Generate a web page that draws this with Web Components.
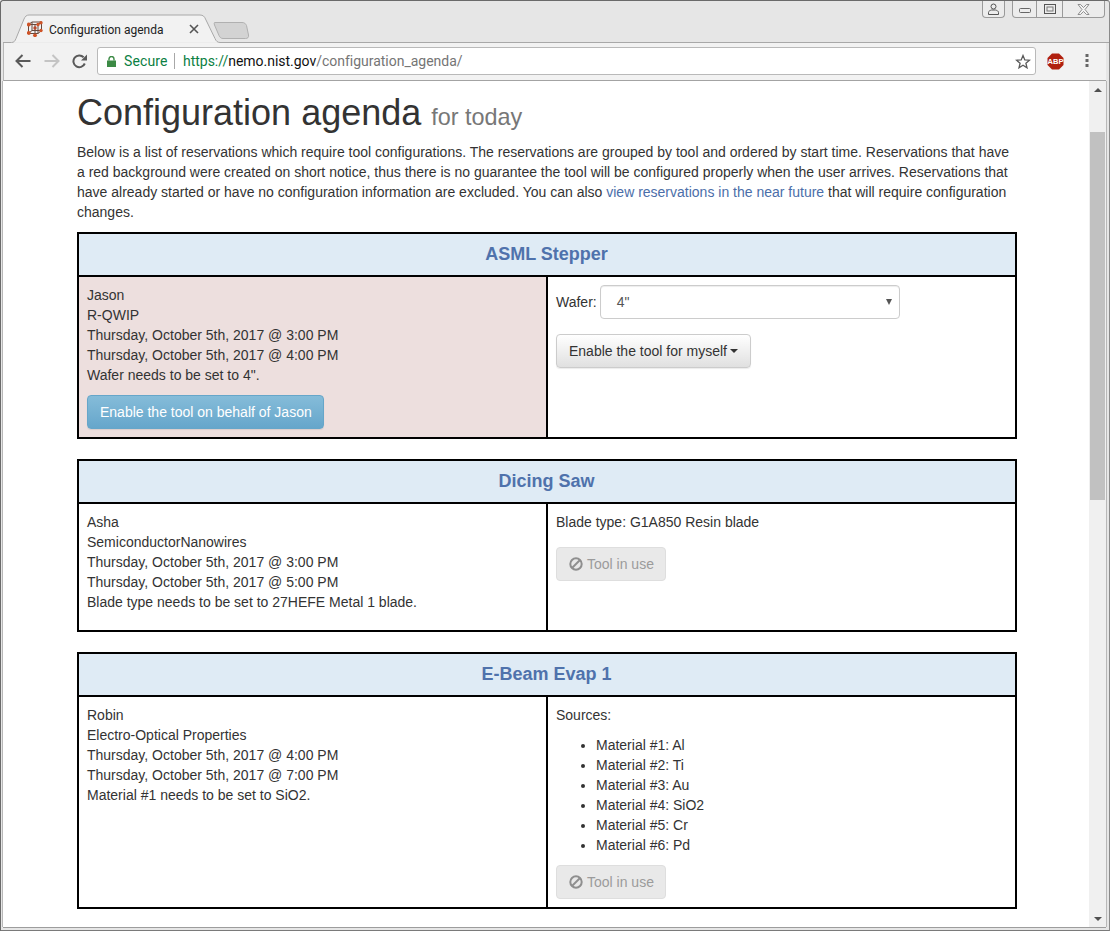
<!DOCTYPE html>
<html lang="en">
<head>
<meta charset="utf-8">
<title>Configuration agenda</title>
<style>
  html, body { margin: 0; padding: 0; height: 931px; overflow: hidden; background: #fff; }
</style>
</head>
<body>
<browser-window>
  <agenda-page>
    <agenda-item tool="ASML Stepper" urgent>
      <p-lines>
        <div>Jason</div>
        <div>R-QWIP</div>
        <div>Thursday, October 5th, 2017 @ 3:00 PM</div>
        <div>Thursday, October 5th, 2017 @ 4:00 PM</div>
        <div>Wafer needs to be set to 4".</div>
      </p-lines>
      <app-button kind="info" style="margin-top:10px">Enable the tool on behalf of Jason</app-button>
      <wafer-select slot="config" label="Wafer:" value='4"'></wafer-select>
      <app-button slot="config" caret style="margin-top:15px">Enable the tool for myself</app-button>
    </agenda-item>

    <agenda-item tool="Dicing Saw">
      <p-lines>
        <div>Asha</div>
        <div>SemiconductorNanowires</div>
        <div>Thursday, October 5th, 2017 @ 3:00 PM</div>
        <div>Thursday, October 5th, 2017 @ 5:00 PM</div>
        <div>Blade type needs to be set to 27HEFE Metal 1 blade.</div>
      </p-lines>
      <p-lines slot="config">
        <div>Blade type: G1A850 Resin blade</div>
      </p-lines>
      <app-button slot="config" kind="disabled" style="margin-top:15px">Tool in use</app-button>
    </agenda-item>

    <agenda-item tool="E-Beam Evap 1">
      <p-lines>
        <div>Robin</div>
        <div>Electro-Optical Properties</div>
        <div>Thursday, October 5th, 2017 @ 4:00 PM</div>
        <div>Thursday, October 5th, 2017 @ 7:00 PM</div>
        <div>Material #1 needs to be set to SiO2.</div>
      </p-lines>
      <p-lines slot="config">
        <div>Sources:</div>
      </p-lines>
      <source-list slot="config">
        <li>Material #1: Al</li>
        <li>Material #2: Ti</li>
        <li>Material #3: Au</li>
        <li>Material #4: SiO2</li>
        <li>Material #5: Cr</li>
        <li>Material #6: Pd</li>
      </source-list>
      <app-button slot="config" kind="disabled">Tool in use</app-button>
    </agenda-item>
  </agenda-page>
</browser-window>

<script>
class BrowserWindow extends HTMLElement {
  constructor() {
    super();
    this.attachShadow({ mode: 'open' });
  }

  connectedCallback() {
    this.shadowRoot.innerHTML = /*html*/ `
      <style>
        :host {
          display: flex;
          flex-direction: column;
          box-sizing: border-box;
          width: 1110px;
          height: 931px;
          background: #e6e6e6;
          border: 1px solid #6a6a6a;
          border-bottom-color: #7a7a7a;
          border-right-color: #8a8a8a;
          border-radius: 3px 3px 0 0;
          overflow: hidden;
        }
        .viewport {
          flex: 1;
          min-height: 0;
          display: flex;
          margin: 0 3px 3px 2px;
          background: #fff;
          box-shadow: 0 1px 0 #9d9d9d, 1px 0 0 #b8b8b8, -1px 0 0 #b8b8b8;
        }
        .content { flex: 1; min-width: 0; overflow: hidden; }
      </style>
      <browser-tabstrip></browser-tabstrip>
      <browser-toolbar></browser-toolbar>
      <div class="viewport">
        <div class="content"><slot></slot></div>
        <page-scrollbar></page-scrollbar>
      </div>
    `;
  }
}

class BrowserTabstrip extends HTMLElement {
  constructor() {
    super();
    this.attachShadow({ mode: 'open' });
  }

  connectedCallback() {
    this.shadowRoot.innerHTML = /*html*/ `
      <style>
        :host {
          display: flex;
          height: 42px;
          position: relative;
          font-family: Roboto, "Noto Sans", sans-serif;
        }
        .shape { position: absolute; left: 0; top: 0; }
        .tab {
          position: relative;
          margin: 14px 0 0 26px;
          width: 172px;
          height: 28px;
          display: flex;
          align-items: center;
          color: #222;
          font-size: 12px;
        }
        .title { margin-left: 6px; flex: 1; white-space: nowrap; padding-top: 1px; }
        .close { display: block; }
        .controls {
          position: relative;
          margin-left: auto;
          margin-right: 4px;
          display: flex;
          align-items: flex-start;
          gap: 7px;
        }
        .btn {
          box-sizing: border-box;
          height: 17px;
          border: 1px solid #9a9a9a;
          border-top: 0;
          display: flex;
          align-items: center;
          justify-content: center;
          background: #ececec;
        }
        .user { width: 23px; border-radius: 0 0 4px 4px; }
        .group { display: flex; }
        .min { width: 25px; border-radius: 0 0 0 4px; }
        .max { width: 26px; border-left: 0; }
        .cls { width: 42px; border-left: 0; border-radius: 0 0 4px 0; }
      </style>
      <svg class="shape" width="1108" height="42" viewBox="0 0 1108 42">
        <path d="M2 42.500H10.500C13 42.500 14 41 15 38.500L23 19C24 16.500 25.500 15 28 15H199C202 15 203.500 16.500 204.500 19L214 38.500C215 41 216.500 42.500 219 42.500H1108" transform="translate(0,-1)" fill="#f2f2f2" stroke="#a8a8a8"/>
        <path d="M214 22.500H241C243.500 22.500 244.500 23.500 245.500 25.500L247.500 35C248 37.500 246.500 38.500 244.500 38.500H222C220 38.500 219 37.500 218 35.500L213.500 25C213 23 213 22.500 214 22.500Z" transform="translate(0,-1)" fill="#d3d3d3" stroke="#b0b0b0"/>
      </svg>
      <div class="tab">
        <svg width="16" height="16" viewBox="0 0 16 16">
          <path d="M1.500 3.500H11V12.500H1.500Z M5 1H14.500V9.500H5Z M1.500 3.500L5 1 M11 3.500L14.500 1 M1.500 12.500L5 9.500 M11 12.500L14.500 9.500 M8 3V15" fill="none" stroke="#66483c" stroke-width="1"/>
          <circle cx="1.800" cy="3.500" r="2" fill="#cf5428"/>
          <circle cx="11" cy="3.500" r="1.700" fill="#cf5428"/>
          <circle cx="14" cy="1.800" r="1.700" fill="#cf5428"/>
          <circle cx="1.800" cy="12" r="1.900" fill="#cf5428"/>
          <circle cx="8" cy="14.300" r="1.900" fill="#cf5428"/>
          <circle cx="14" cy="9.500" r="1.700" fill="#cf5428"/>
          <circle cx="8" cy="7" r="1.700" fill="#b8482a"/>
        </svg>
        <span class="title">Configuration agenda</span>
        <svg class="close" width="10" height="10" viewBox="0 0 10 10">
          <path d="M1 1L9 9M9 1L1 9" stroke="#555" stroke-width="1.600"/>
        </svg>
      </div>
      <div class="controls">
        <div class="btn user">
          <svg width="11" height="12" viewBox="0 0 11 12">
            <circle cx="5.500" cy="3.500" r="2.500" fill="none" stroke="#555"/>
            <path d="M.5 11.500V9.500C.5 8 2 7.500 3.500 7H7.500C9 7.500 10.500 8 10.500 9.500V11.500Z" fill="none" stroke="#555"/>
          </svg>
        </div>
        <div class="group">
          <div class="btn min">
            <svg width="12" height="6" viewBox="0 0 12 6" style="margin-top:3px"><rect x=".5" y=".5" width="11" height="4" rx="1" fill="none" stroke="#666"/></svg>
          </div>
          <div class="btn max">
            <svg width="12" height="10" viewBox="0 0 12 10"><rect x=".5" y=".5" width="11" height="9" fill="none" stroke="#555"/><rect x="3" y="3" width="6" height="4" fill="none" stroke="#777"/></svg>
          </div>
          <div class="btn cls">
            <svg width="13" height="11" viewBox="0 0 13 11"><path d="M1 .5H3.500L6.500 3.500L9.500 .5H12L8 5.500L12 10.500H9.500L6.500 7.500L3.500 10.500H1L5 5.500Z" fill="#f4f4f4" stroke="#777" stroke-width=".8"/></svg>
          </div>
        </div>
      </div>
    `;
  }
}

class BrowserToolbar extends HTMLElement {
  constructor() {
    super();
    this.attachShadow({ mode: 'open' });
  }

  connectedCallback() {
    this.shadowRoot.innerHTML = /*html*/ `
      <style>
        :host {
          display: flex;
          align-items: center;
          box-sizing: border-box;
          height: 38px;
          margin: 0 3px 0 2px;
          padding-bottom: 1px;
          background: #f2f2f2;
          border-bottom: 1px solid #a3a3a3;
          border-left: 1px solid #b8b8b8;
          font-family: Roboto, "Noto Sans", sans-serif;
        }
        svg { display: block; flex: none; }
        .back { margin-left: 11px; }
        .fwd { margin-left: 13px; }
        .reload { margin-left: 12px; }
        .omni {
          box-sizing: border-box;
          width: 939px;
          height: 28px;
          margin-left: 10px;
          display: flex;
          align-items: center;
          background: #fff;
          border: 1px solid #b9b9b9;
          border-radius: 3px;
          font-size: 14px;
          white-space: nowrap;
        }
        .lock { margin-left: 9px; }
        .secure { margin-left: 8px; color: #0b8043; width: 50px; letter-spacing: .14px; }
        .sep { width: 1px; height: 16px; background: #a8a8a8; }
        .url { margin-left: 8px; flex: 1; color: #757575; letter-spacing: -.02px; }
        .url b { font-weight: 400; color: #0b8043; }
        .url i { font-style: normal; color: #111; }
        .star { margin-right: 4px; }
        .abp { margin-left: 11px; }
        .menu { margin-left: 21px; }
      </style>
      <svg class="back" width="16" height="14" viewBox="0 0 16 14"><path d="M15.500 7H2 M7.500 1L1.500 7L7.500 13" fill="none" stroke="#5a5a5a" stroke-width="2"/></svg>
      <svg class="fwd" width="16" height="14" viewBox="0 0 16 14"><path d="M.5 7H14 M8.500 1L14.500 7L8.500 13" fill="none" stroke="#c4c4c4" stroke-width="2"/></svg>
      <svg class="reload" width="15" height="15" viewBox="0 0 15 15"><path d="M12.800 9.500A5.900 5.900 0 1 1 11.600 3.200" fill="none" stroke="#5a5a5a" stroke-width="2"/><path d="M9 6.500H15V.5Z" fill="#5a5a5a"/></svg>
      <div class="omni">
        <svg class="lock" width="9" height="11" viewBox="0 0 9 11"><path d="M0 4.500H9V11H0Z" fill="#3c8a45"/><path d="M2 4.500V3A2.500 2.500 0 0 1 7 3V4.500" fill="none" stroke="#3c8a45" stroke-width="1.400"/></svg>
        <span class="secure">Secure</span>
        <span class="sep"></span>
        <span class="url"><b>https://</b><i>nemo.nist.gov</i>/configuration_agenda/</span>
        <svg class="star" width="16" height="15" viewBox="0 0 16 15"><path d="M8 1.500L9.800 5.900L14.500 6.200L10.900 9.200L12 13.800L8 11.300L4 13.800L5.100 9.200L1.500 6.200L6.200 5.900Z" fill="none" stroke="#5a5a5a" stroke-width="1.300"/></svg>
      </div>
      <svg class="abp" width="17" height="17" viewBox="0 0 17 17">
        <path d="M5 .5H12L16.500 5V12L12 16.500H5L.5 12V5Z" fill="#b0200f"/>
        <text x="8.500" y="11.300" font-family="Liberation Sans, sans-serif" font-size="7.500" font-weight="700" fill="#fff" text-anchor="middle">ABP</text>
      </svg>
      <svg class="menu" width="4" height="14" viewBox="0 0 4 14"><rect x=".5" y="0" width="3" height="3" fill="#666"/><rect x=".5" y="5" width="3" height="3" fill="#666"/><rect x=".5" y="10" width="3" height="3" fill="#666"/></svg>
    `;
  }
}

class PageScrollbar extends HTMLElement {
  constructor() {
    super();
    this.attachShadow({ mode: 'open' });
  }

  connectedCallback() {
    this.shadowRoot.innerHTML = /*html*/ `
      <style>
        :host {
          display: flex;
          flex-direction: column;
          flex: none;
          width: 17px;
          background: #f0f0f0;
        }
        .end { height: 17px; display: flex; align-items: center; justify-content: center; }
        .up { width: 0; height: 0; border: 4px solid transparent; border-top: 0; border-bottom: 4px solid #505050; }
        .down { width: 0; height: 0; border: 4px solid transparent; border-bottom: 0; border-top: 4px solid #505050; }
        .gap { height: 34px; }
        .thumb { height: 368px; margin: 0 1px; background: #c1c1c1; }
        .rest { flex: 1; }
      </style>
      <div class="end"><div class="up"></div></div>
      <div class="gap"></div>
      <div class="thumb"></div>
      <div class="rest"></div>
      <div class="end"><div class="down"></div></div>
    `;
  }
}

class AgendaPage extends HTMLElement {
  constructor() {
    super();
    this.attachShadow({ mode: 'open' });
  }

  connectedCallback() {
    this.shadowRoot.innerHTML = /*html*/ `
      <style>
        :host {
          display: block;
          box-sizing: border-box;
          width: 1014px;
          padding: 12px 0 0 74px;
          font: 14px/20px "Liberation Sans", Arial, sans-serif;
          color: #333;
        }
        h1 {
          margin: 0 0 9px;
          font-size: 36px;
          font-weight: 500;
          line-height: 39.6px;
        }
        small { font-size: 65%; font-weight: 400; color: #777; line-height: 1; }
        .intro { margin: 0 0 10px; width: 940px; white-space: nowrap; }
        a { color: #4b6ea9; text-decoration: none; }
      </style>
      <h1>Configuration agenda <small>for today</small></h1>
      <div class="intro">
        <div>Below is a list of reservations which require tool configurations. The reservations are grouped by tool and ordered by start time. Reservations that have</div>
        <div>a red background were created on short notice, thus there is no guarantee the tool will be configured properly when the user arrives. Reservations that</div>
        <div><span>have already started or have no configuration information are excluded. You can also </span><a href="#">view reservations in the near future</a><span> that will require configuration</span></div>
        <div>changes.</div>
      </div>
      <slot></slot>
    `;
  }
}

class AgendaItem extends HTMLElement {
  constructor() {
    super();
    this.attachShadow({ mode: 'open' });
  }

  connectedCallback() {
    this.shadowRoot.innerHTML = /*html*/ `
      <style>
        :host {
          display: block;
          box-sizing: border-box;
          width: 940px;
          margin-bottom: 20px;
          border: 2px solid #000;
          background: #fff;
        }
        .tool {
          height: 41px;
          padding-right: 1px;
          border-bottom: 2px solid #000;
          background: #dfebf5;
          color: #4f72ac;
          font-size: 18px;
          font-weight: 700;
          line-height: 40px;
          text-align: center;
        }
        .row { display: grid; grid-template-columns: 467px 1fr; }
        .who { padding: 8px 8px 18px; }
        .config { padding: 8px; border-left: 2px solid #000; }
        :host([urgent]) .who { background: #eddfde; padding-bottom: 8px; }
      </style>
      <div class="tool">${this.getAttribute('tool')}</div>
      <div class="row">
        <div class="who"><slot></slot></div>
        <div class="config"><slot name="config"></slot></div>
      </div>
    `;
  }
}

class PLines extends HTMLElement {
  constructor() {
    super();
    this.attachShadow({ mode: 'open' }).innerHTML = `
      <style>:host { display: block; }</style>
      <slot></slot>
    `;
  }
}

class AppButton extends HTMLElement {
  constructor() {
    super();
    this.attachShadow({ mode: 'open' });
  }

  connectedCallback() {
    const kind = this.getAttribute('kind') || 'default';
    const ban = kind === 'disabled'
      ? `<svg width="14" height="14" viewBox="0 0 14 14"><circle cx="7" cy="7" r="5.700" fill="none" stroke="#8f8f8f" stroke-width="2"/><path d="M3 11L11 3" stroke="#8f8f8f" stroke-width="2"/></svg>`
      : '';
    const caret = this.hasAttribute('caret') ? `<span class="caret"></span>` : '';
    this.shadowRoot.innerHTML = /*html*/ `
      <style>
        :host { display: block; width: max-content; }
        .btn {
          box-sizing: border-box;
          height: 34px;
          display: flex;
          align-items: center;
          padding: 0 12px;
          gap: 3px;
          border: 1px solid #ccc;
          border-radius: 4px;
          white-space: nowrap;
          color: #333;
          background: linear-gradient(#fff, #e0e0e0);
          box-shadow: 0 1px 1px rgba(0,0,0,.08);
        }
        .info {
          color: #fff;
          padding-right: 11px;
          border-color: #66a6c9;
          background: linear-gradient(#85bcd9, #66a6cb);
        }
        .disabled {
          color: #9b9b9b;
          gap: 4px;
          padding-right: 11px;
          background: #e9e9e9;
          border-color: #dedede;
          box-shadow: none;
        }
        .caret {
          width: 0;
          height: 0;
          border: 4px solid transparent;
          border-bottom: 0;
          border-top-color: #333;
        }
      </style>
      <div class="btn ${kind}">${ban}<slot></slot>${caret}</div>
    `;
  }
}

class WaferSelect extends HTMLElement {
  constructor() {
    super();
    this.attachShadow({ mode: 'open' });
  }

  connectedCallback() {
    this.shadowRoot.innerHTML = /*html*/ `
      <style>
        :host { display: flex; align-items: center; gap: 3px; }
        .box {
          box-sizing: border-box;
          width: 300px;
          height: 34px;
          display: flex;
          align-items: center;
          justify-content: space-between;
          padding: 0 7px 0 16px;
          background: #fff;
          border: 1px solid #ccc;
          border-radius: 4px;
          color: #555;
          box-shadow: inset 0 1px 1px rgba(0,0,0,.075);
        }
        .arrow {
          width: 0;
          height: 0;
          border: 3.500px solid transparent;
          border-bottom: 0;
          border-top: 6px solid #555;
        }
      </style>
      <span>${this.getAttribute('label')}</span>
      <div class="box"><span>${this.getAttribute('value')}</span><span class="arrow"></span></div>
    `;
  }
}

class SourceList extends HTMLElement {
  constructor() {
    super();
    this.attachShadow({ mode: 'open' }).innerHTML = `
      <style>
        :host { display: block; margin: 10px 0; }
        ul { margin: 0; padding: 0 0 0 40px; }
      </style>
      <ul><slot></slot></ul>
    `;
  }
}

customElements.define('browser-window', BrowserWindow);
customElements.define('browser-tabstrip', BrowserTabstrip);
customElements.define('browser-toolbar', BrowserToolbar);
customElements.define('page-scrollbar', PageScrollbar);
customElements.define('agenda-page', AgendaPage);
customElements.define('agenda-item', AgendaItem);
customElements.define('p-lines', PLines);
customElements.define('app-button', AppButton);
customElements.define('wafer-select', WaferSelect);
customElements.define('source-list', SourceList);
</script>
</body>
</html>
